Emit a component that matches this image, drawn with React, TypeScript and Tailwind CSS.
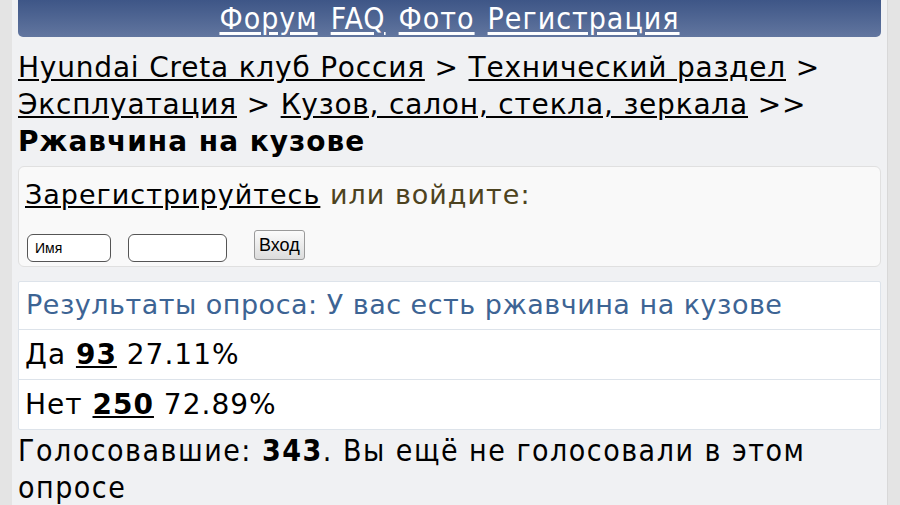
export default function App() {
  const sans = "font-['DejaVu_Sans',sans-serif]";
  const cond = "font-['DejaVu_Sans_Condensed','DejaVu_Sans',sans-serif]";

  return (
    <div className="h-[505px] w-[900px] overflow-hidden bg-[#e4e4e4] px-[12px]">
      <div className="h-full w-[876px] border-r border-[#d8d8d8] bg-[#f0f1f3] px-[6px]">
        <nav
          className={`${cond} flex h-[37px] items-center justify-center gap-[13px] rounded-b-[5px] bg-gradient-to-b from-[#3e5687] to-[#62769f] text-[30px] leading-none tracking-[1px] text-white`}
        >
          <a className="underline underline-offset-[3px]" href="#">Форум</a>
          <a className="underline underline-offset-[3px]" href="#">FAQ</a>
          <a className="underline underline-offset-[3px]" href="#">Фото</a>
          <a className="underline underline-offset-[3px]" href="#">Регистрация</a>
        </nav>

        <div className={`${sans} mt-[12px] text-[28px] leading-[37px] tracking-[0.8px] text-black`}>
          <a className="underline" href="#">Hyundai Creta клуб Россия</a> &gt;{" "}
          <a className="underline" href="#">Технический раздел</a> &gt;{" "}
          <a className="underline" href="#">Эксплуатация</a> &gt;{" "}
          <a className="underline" href="#">Кузов, салон, стекла, зеркала</a> &gt;&gt;
          <div className="font-bold tracking-[1px]">Ржавчина на кузове</div>
        </div>

        <div className="mt-[6px] h-[101px] rounded-[6px] border border-[#e0e0e0] bg-[#f9f9f9] px-[6px] pt-[11px]">
          <div className={`${sans} text-[27px] leading-[34px] tracking-[1px] text-[#4d4320]`}>
            <a className="text-black underline" href="#">Зарегистрируйтесь</a> или войдите:
          </div>
          <div className="mt-[18px] flex items-center">
            <input
              className="ml-[2px] h-[28px] w-[84px] rounded-[6px] border border-[#555] bg-white px-[7px] font-['Liberation_Sans',sans-serif] text-[14px] text-black outline-none"
              defaultValue="Имя"
            />
            <input className="ml-[17px] h-[28px] w-[99px] rounded-[6px] border border-[#555] bg-white outline-none" />
            <button className="mb-[6px] ml-[27px] h-[30px] rounded-[3px] border border-[#9a9a9a] bg-gradient-to-b from-[#fbfbfb] to-[#dcdcdc] px-[4px] font-['Liberation_Sans',sans-serif] text-[18px] text-black">
              Вход
            </button>
          </div>
        </div>

        <div className={`${sans} mt-[14px] rounded-[2px] border border-[#dde3ea] bg-white`}>
          <div className="flex h-[48px] items-center border-b border-[#dde3ea] px-[7px] text-[27px] tracking-[0.5px] text-[#3d6494]">
            Результаты опроса: У вас есть ржавчина на кузове
          </div>
          <div className="flex h-[50px] items-center border-b border-[#dde3ea] px-[6px] text-[28px] tracking-[1px] text-black">
            Да&nbsp;<a className="font-bold underline" href="#">93</a>&nbsp;27.11%
          </div>
          <div className="flex h-[49px] items-center px-[6px] text-[28px] tracking-[1px] text-black">
            Нет&nbsp;<a className="font-bold underline" href="#">250</a>&nbsp;72.89%
          </div>
        </div>

        <p className={`${cond} mt-[2px] text-[30px] leading-[37px] tracking-[1.5px] text-black`}>
          Голосовавшие: <b>343</b>. Вы ещё не голосовали в этом опросе
        </p>
      </div>
    </div>
  );
}
